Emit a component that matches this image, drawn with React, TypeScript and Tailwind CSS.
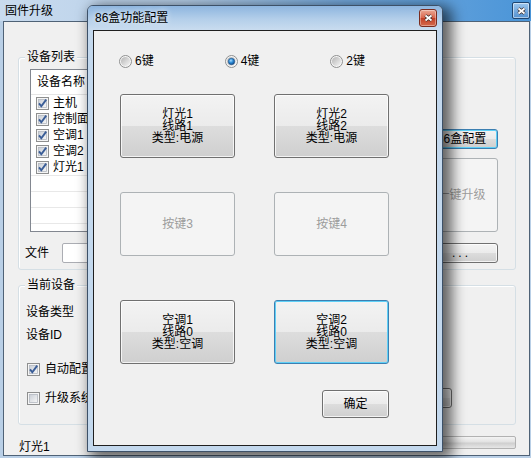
import type { ReactNode } from 'react';

const UI_FONT = "font-['Liberation_Sans','Noto_Sans_CJK_SC',sans-serif]";

type ButtonKind = 'normal' | 'focus' | 'disabled';

const BUTTON_LOOK: Record<ButtonKind, string> = {
  normal:
    'border-[#707070] text-black bg-[linear-gradient(to_bottom,#f3f3f3_0%,#ebebeb_50%,#dddddd_50%,#cfcfcf_100%)] shadow-[inset_0_0_0_1px_rgba(255,255,255,0.75)]',
  focus:
    'border-[#3c7fb1] text-black bg-[linear-gradient(to_bottom,#f3f3f3_0%,#ebebeb_50%,#dddddd_50%,#cfcfcf_100%)] shadow-[inset_0_0_0_1px_#5fd0f7]',
  disabled: 'border-[#adb2b5] text-[#9c9c9c] bg-[#f4f4f4]',
};

function WinButton({
  kind = 'normal',
  className = '',
  children,
}: {
  kind?: ButtonKind;
  className?: string;
  children?: ReactNode;
}) {
  return (
    <button
      type="button"
      className={`flex shrink-0 flex-col items-center justify-center rounded-[3px] border text-center text-[12px] leading-[12px] ${BUTTON_LOOK[kind]} ${className}`}
    >
      {children}
    </button>
  );
}

function Radio({ checked = false }: { checked?: boolean }) {
  return (
    <svg width="13" height="13" viewBox="0 0 13 13" className="shrink-0">
      <defs>
        <linearGradient id="radio-well" x1="0" y1="0" x2="1" y2="1">
          <stop offset="0" stopColor="#b4b4b4" />
          <stop offset="1" stopColor="#f6f6f6" />
        </linearGradient>
        <radialGradient id="radio-dot" cx="0.4" cy="0.35" r="0.75">
          <stop offset="0" stopColor="#a6dcff" />
          <stop offset="0.45" stopColor="#2b8ad6" />
          <stop offset="1" stopColor="#0b3a73" />
        </radialGradient>
      </defs>
      <circle cx="6.5" cy="6.5" r="6" fill="#f6f6f6" stroke="#8e8f8f" />
      <circle cx="6.5" cy="6.5" r="4.6" fill="url(#radio-well)" />
      {checked && <circle cx="6.5" cy="6.5" r="3.2" fill="url(#radio-dot)" stroke="#1d4f86" strokeWidth="0.6" />}
    </svg>
  );
}

function CheckBox({ checked = false }: { checked?: boolean }) {
  return (
    <svg width="13" height="13" viewBox="0 0 13 13" className="shrink-0">
      <defs>
        <linearGradient id="check-well" x1="0" y1="0" x2="1" y2="1">
          <stop offset="0" stopColor="#c9ced6" />
          <stop offset="1" stopColor="#f7f7f7" />
        </linearGradient>
      </defs>
      <rect x="0.5" y="0.5" width="12" height="12" fill="#f5f5f5" stroke="#8e8f8f" />
      <rect x="2.5" y="2.5" width="8" height="8" fill="url(#check-well)" stroke="#b4b9c1" strokeWidth="0.8" />
      {checked && (
        <path d="M3 6.4 L5.3 9.2 L10.2 2.6" fill="none" stroke="#3a5d97" strokeWidth="1.9" />
      )}
    </svg>
  );
}

function CloseGlyph() {
  return (
    <svg width="9" height="8" viewBox="0 0 9 8">
      <path d="M1.5 1.5 L7.5 6.5 M7.5 1.5 L1.5 6.5" stroke="#3a2a28" strokeWidth="3.4" />
      <path d="M1.5 1.5 L7.5 6.5 M7.5 1.5 L1.5 6.5" stroke="#ffffff" strokeWidth="1.8" />
    </svg>
  );
}

function GroupBox({ title, className = '', children }: { title: string; className?: string; children: ReactNode }) {
  return (
    <div className={`relative rounded-[3px] border border-[#d5dfe5] shadow-[inset_1px_1px_0_#ffffff] ${className}`}>
      <span className="absolute -top-[9px] left-[6px] bg-[#f0f0f0] px-[2px] leading-[16px]">{title}</span>
      {children}
    </div>
  );
}

const devices = ['主机', '控制面板', '空调1', '空调2', '灯光1'];

function MainWindow() {
  return (
    <div className="flex h-full flex-col">
      <div className="flex h-[21px] shrink-0 items-center justify-between bg-[linear-gradient(to_right,#c9dbee_0%,#b6cfe9_35%,#74a9dd_65%,#4a95d8_100%)] pl-[5px] pr-[1px]">
        <span className="leading-[14px]">固件升级</span>
        <span className="flex h-[17px] w-[18px] items-center justify-center rounded-[2px] border border-[#1f4570] bg-[linear-gradient(to_bottom,#9cc6ee,#5390cf)] shadow-[inset_0_0_0_1px_rgba(255,255,255,0.5)]">
          <CloseGlyph />
        </span>
      </div>

      <div className="ml-[3px] mr-[1px] flex h-[435px] flex-col border border-[#4f6276] bg-[#f0f0f0]">
        <GroupBox title="设备列表" className="ml-[14px] mr-[13px] mt-[35px] h-[213px] pl-[11px] pr-[17px] pt-[11px]">
          <div className="flex gap-[12px]">
            <div className="h-[163px] flex-1 overflow-hidden border border-[#828790] bg-white">
              <div className="flex h-[25px] items-center border-b border-[#e5e5e5] pl-[6px]">
                <span className="w-[120px] border-r border-[#e5e5e5]">设备名称</span>
                <span className="pl-[6px]">版本</span>
              </div>
              {devices.map((name) => (
                <div key={name} className="flex h-[16px] items-center gap-[4px] pl-[5px] leading-[16px]">
                  <CheckBox checked />
                  <span>{name}</span>
                </div>
              ))}
              {[0, 1, 2, 3].map((i) => (
                <div key={i} className="h-[16px] border-t border-[#e8e8e8]" />
              ))}
            </div>
            <div className="flex w-[73px] flex-col">
              <WinButton kind="focus" className="mt-[60px] h-[20px] w-full">
                86盒配置
              </WinButton>
              <WinButton kind="disabled" className="mt-[9px] h-[74px] w-full">
                一键升级
              </WinButton>
            </div>
          </div>
          <div className="-ml-[5px] mt-[11px] flex h-[20px] items-center">
            <span className="w-[37px] leading-[16px]">文件</span>
            <div className="h-[20px] flex-1 rounded-[2px] border border-[#abadb3] bg-white" />
            <WinButton className="ml-[12px] h-[20px] w-[73px] tracking-[3px]">...</WinButton>
          </div>
        </GroupBox>

        <GroupBox title="当前设备" className="ml-[14px] mr-[13px] mt-[15px] h-[140px] pl-[7px] pt-[18px]">
          <div className="leading-[16px]">设备类型</div>
          <div className="mt-[7px] leading-[16px]">设备ID</div>
          <div className="mt-[18px] flex h-[16px] items-center gap-[5px] pl-[1px]">
            <CheckBox checked />
            <span>自动配置</span>
          </div>
          <div className="mt-[11px] flex h-[20px] items-center justify-between pl-[1px] pr-[63px]">
            <div className="flex items-center gap-[5px]">
              <CheckBox />
              <span>升级系统</span>
            </div>
            <WinButton className="h-[20px] w-[76px]">升级</WinButton>
          </div>
        </GroupBox>

        <div className="mr-[13px] mt-[11px] flex h-[13px] items-start pl-[15px]">
          <span className="mt-[3px] leading-[16px]">灯光1</span>
          <div className="ml-auto h-[13px] w-[416px] rounded-[2px] border border-[#b2b2b2] bg-[linear-gradient(to_bottom,#f4f4f4_0%,#e2e2e2_45%,#cfcfcf_55%,#e6e6e6_100%)]" />
        </div>
      </div>
    </div>
  );
}

function ConfigDialog() {
  return (
    <div className="absolute left-[87px] top-[5px] flex h-[447px] w-[356px] flex-col rounded-t-[6px] border border-[#3d5168] bg-[#c3d8ed] shadow-[6px_4px_14px_3px_rgba(0,0,0,0.6)]">
      <div className="flex h-[24px] shrink-0 items-center justify-between rounded-t-[5px] bg-[linear-gradient(to_bottom,#8db5df_0%,#b4cfea_55%,#c9dcef_100%)] pl-[7px] pr-[5px]">
        <span className="leading-[14px] [text-shadow:0_0_6px_#ffffff]">86盒功能配置</span>
        <span className="flex h-[18px] w-[18px] items-center justify-center rounded-[3px] border border-[#7a2c1f] bg-[linear-gradient(to_bottom,#eaa894_0%,#d9644a_50%,#c23e25_51%,#d46a4c_100%)] shadow-[inset_0_0_0_1px_rgba(255,255,255,0.35)]">
          <CloseGlyph />
        </span>
      </div>

      <div className="mx-[5px] flex h-[416px] flex-col border border-[#1f1f1f] bg-[#f0f0f0]">
        <div className="mt-[24px] flex pl-[25px]">
          {[
            { label: '6键', on: false },
            { label: '4键', on: true },
            { label: '2键', on: false },
          ].map((r) => (
            <label key={r.label} className="flex h-[13px] w-[115px] items-center gap-[3px] leading-[13px]">
              <Radio checked={r.on} />
              <span>{r.label}</span>
            </label>
          ))}
        </div>

        <div className="flex flex-col pl-[26px]">
          <div className="mt-[26px] flex gap-[39px]">
            <WinButton className="h-[64px] w-[115px]">
              <span>灯光1</span>
              <span>线路1</span>
              <span>类型:电源</span>
            </WinButton>
            <WinButton className="h-[64px] w-[115px]">
              <span>灯光2</span>
              <span>线路2</span>
              <span>类型:电源</span>
            </WinButton>
          </div>
          <div className="mt-[34px] flex gap-[39px]">
            <WinButton kind="disabled" className="h-[64px] w-[115px]">
              按键3
            </WinButton>
            <WinButton kind="disabled" className="h-[64px] w-[115px]">
              按键4
            </WinButton>
          </div>
          <div className="mt-[44px] flex gap-[39px]">
            <WinButton className="h-[64px] w-[115px]">
              <span>空调1</span>
              <span>线路0</span>
              <span>类型:空调</span>
            </WinButton>
            <WinButton kind="focus" className="h-[64px] w-[115px]">
              <span>空调2</span>
              <span>线路0</span>
              <span>类型:空调</span>
            </WinButton>
          </div>
          <div className="mt-[26px] flex w-[269px] justify-end">
            <WinButton className="h-[28px] w-[67px]">确定</WinButton>
          </div>
        </div>
      </div>
    </div>
  );
}

export default function App() {
  return (
    <div className={`relative h-[458px] w-[531px] overflow-hidden bg-[#b9cfe6] text-[12px] text-black ${UI_FONT}`}>
      <MainWindow />
      <ConfigDialog />
    </div>
  );
}
